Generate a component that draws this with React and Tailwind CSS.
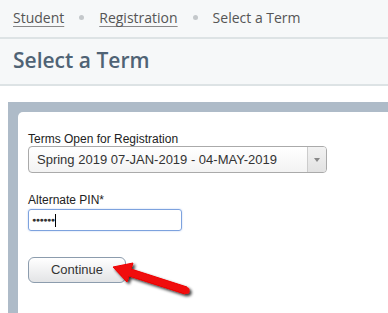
import React from "react"

const Bullet = () => <span className="mx-[15px] inline-block h-[5px] w-[5px] rounded-full bg-[#c4c8cb]" />

const Arrow = () => (
  <svg className="pointer-events-none absolute left-0 top-0" width="388" height="313" viewBox="0 0 388 313">
    <defs>
      <filter id="sh" x="-20%" y="-20%" width="140%" height="140%">
        <feGaussianBlur in="SourceAlpha" stdDeviation="1.6" />
        <feOffset dx="2" dy="2" result="b" />
        <feComponentTransfer>
          <feFuncA type="linear" slope="0.8" />
        </feComponentTransfer>
        <feMerge>
          <feMergeNode />
          <feMergeNode in="SourceGraphic" />
        </feMerge>
      </filter>
    </defs>
    <g filter="url(#sh)">
      <polygon points="113,267 133,263 131,269 187,287 185,294 129,276 127,282" fill="#f00d0d" stroke="#e00" strokeWidth="1" strokeLinejoin="round" />
      <circle cx="186" cy="290.5" r="3.6" fill="#f00d0d" />
    </g>
  </svg>
)

export default function App() {
  return (
    <div className="relative h-[313px] w-[388px] overflow-hidden bg-white">
      <div className="flex h-[39px] items-center border-b-2 border-[#dde3e5] bg-[#f6f8f9] px-[13px] pb-[2px] text-[14px] text-[#555]" style={{ fontFamily: "'Open Sans', sans-serif" }}>
        <span className="underline decoration-[#888] underline-offset-[3px]">Student</span>
        <Bullet />
        <span className="underline decoration-[#888] underline-offset-[3px]">Registration</span>
        <Bullet />
        <span>Select a Term</span>
      </div>
      <div className="flex h-[47px] items-center border-b-2 border-[#dde3e5] bg-[#f6f8f9] px-[13px] pb-[2px]" style={{ fontFamily: "'Open Sans', sans-serif" }}>
        <h1 className="text-[21px] font-semibold text-[#4f6375]">Select a Term</h1>
      </div>
      <div className="ml-[8px] mt-[16px] h-[220px] bg-[#aebbc8] pl-[10px] pt-[10px]">
        <div className="h-full rounded-tl-[5px] bg-white pl-[10px] pt-[20px] text-[#222]" style={{ fontFamily: "'Liberation Sans', Arial, sans-serif" }}>
          <div className="text-[12px] leading-[14px]">Terms Open for Registration</div>
          <div className="flex h-[27px] w-[299px] overflow-hidden rounded-[4px] border border-[#aaa] bg-gradient-to-b from-white to-[#f3f3f3]">
            <div className="flex flex-1 items-center pl-[8px] text-[13px] text-[#333]">Spring 2019 07-JAN-2019 - 04-MAY-2019</div>
            <div className="flex w-[19px] items-center justify-center border-l border-[#ccc] bg-gradient-to-b from-[#f2f2f2] to-[#e2e2e2]">
              <span className="h-0 w-0 border-x-[3.5px] border-t-[4px] border-x-transparent border-t-[#888]" />
            </div>
          </div>
          <div className="mt-[20px] text-[12px] leading-[14px]">Alternate PIN*</div>
          <div className="mt-[2px] flex h-[22px] w-[154px] items-center rounded-[3px] border border-[#7da2de] pl-[3px] shadow-[0_0_2px_#b9cff0]">
            <span className="text-[7px] tracking-[-0.5px] text-[#333]">●●●●●●</span>
            <span className="ml-[1px] h-[13px] w-px bg-black" />
          </div>
          <button className="mt-[26px] h-[26px] w-[98px] rounded-[6px] border border-[#8c9cad] bg-gradient-to-b from-white to-[#e3e4e6] text-[13px] text-[#333]">
            Continue
          </button>
        </div>
      </div>
      <Arrow />
    </div>
  )
}
